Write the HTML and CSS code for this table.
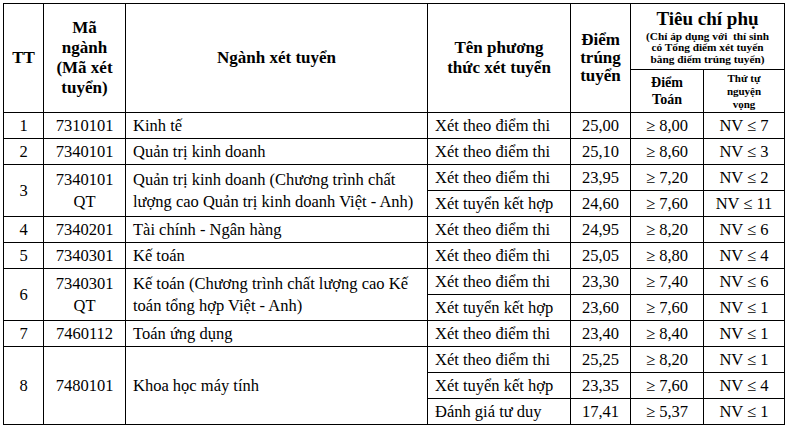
FILE: index.html
```html
<!DOCTYPE html>
<html lang="vi">
<head>
<meta charset="utf-8">
<link rel="stylesheet" href="styles.css">
</head>
<body>
<table class="scores">
  <colgroup>
    <col class="c-tt"><col class="c-ma"><col class="c-nganh"><col class="c-pt"><col class="c-diem"><col class="c-toan"><col class="c-nv">
  </colgroup>
  <thead>
    <tr class="h1">
      <th rowspan="2" class="th-big">TT</th>
      <th rowspan="2" class="th-big">Mã<br>ngành<br>(Mã xét<br>tuyển)</th>
      <th rowspan="2" class="th-big">Ngành xét tuyển</th>
      <th rowspan="2" class="th-big">Tên phương<br>thức xét tuyển</th>
      <th rowspan="2" class="th-big th-diem">Điểm<br>trúng<br>tuyển</th>
      <th colspan="2" class="th-tieuchi">
        <div class="tc-title">Tiêu chí phụ</div>
        <div class="tc-note">
          <div class="tc-line">(Chỉ áp dụng với&nbsp; thí sinh</div>
          <div class="tc-line">có Tổng điểm xét tuyển</div>
          <div class="tc-line">bằng điểm trúng tuyển)</div>
        </div>
      </th>
    </tr>
    <tr class="h2">
      <th class="th-toan">Điểm<br>Toán</th>
      <th class="th-nv"><div class="nv-clip">Thứ tự<br>nguyện<br>vọng</div></th>
    </tr>
  </thead>
  <tbody>
    <tr><td class="ctr">1</td><td class="ctr">7310101</td><td class="txt">Kinh tế</td><td class="txt">Xét theo điểm thi</td><td class="ctr">25,00</td><td class="ctr">≥ 8,00</td><td class="ctr">NV ≤ 7</td></tr>
    <tr><td class="ctr">2</td><td class="ctr">7340101</td><td class="txt">Quản trị kinh doanh</td><td class="txt">Xét theo điểm thi</td><td class="ctr">25,10</td><td class="ctr">≥ 8,60</td><td class="ctr">NV ≤ 3</td></tr>
    <tr><td rowspan="2" class="ctr">3</td><td rowspan="2" class="ctr">7340101<br>QT</td><td rowspan="2" class="txt">Quản trị kinh doanh (Chương trình chất lượng cao Quản trị kinh doanh Việt - Anh)</td><td class="txt">Xét theo điểm thi</td><td class="ctr">23,95</td><td class="ctr">≥ 7,20</td><td class="ctr">NV ≤ 2</td></tr>
    <tr><td class="txt">Xét tuyển kết hợp</td><td class="ctr">24,60</td><td class="ctr">≥ 7,60</td><td class="ctr">NV ≤ 11</td></tr>
    <tr><td class="ctr">4</td><td class="ctr">7340201</td><td class="txt">Tài chính - Ngân hàng</td><td class="txt">Xét theo điểm thi</td><td class="ctr">24,95</td><td class="ctr">≥ 8,20</td><td class="ctr">NV ≤ 6</td></tr>
    <tr><td class="ctr">5</td><td class="ctr">7340301</td><td class="txt">Kế toán</td><td class="txt">Xét theo điểm thi</td><td class="ctr">25,05</td><td class="ctr">≥ 8,80</td><td class="ctr">NV ≤ 4</td></tr>
    <tr><td rowspan="2" class="ctr">6</td><td rowspan="2" class="ctr">7340301<br>QT</td><td rowspan="2" class="txt">Kế toán (Chương trình chất lượng cao Kế toán tổng hợp Việt - Anh)</td><td class="txt">Xét theo điểm thi</td><td class="ctr">23,30</td><td class="ctr">≥ 7,40</td><td class="ctr">NV ≤ 6</td></tr>
    <tr><td class="txt">Xét tuyển kết hợp</td><td class="ctr">23,60</td><td class="ctr">≥ 7,60</td><td class="ctr">NV ≤ 1</td></tr>
    <tr><td class="ctr">7</td><td class="ctr">7460112</td><td class="txt">Toán ứng dụng</td><td class="txt">Xét theo điểm thi</td><td class="ctr">23,40</td><td class="ctr">≥ 8,40</td><td class="ctr">NV ≤ 1</td></tr>
    <tr><td rowspan="3" class="ctr">8</td><td rowspan="3" class="ctr">7480101</td><td rowspan="3" class="txt">Khoa học máy tính</td><td class="txt">Xét theo điểm thi</td><td class="ctr">25,25</td><td class="ctr">≥ 8,20</td><td class="ctr">NV ≤ 1</td></tr>
    <tr><td class="txt">Xét tuyển kết hợp</td><td class="ctr">23,35</td><td class="ctr">≥ 7,60</td><td class="ctr">NV ≤ 4</td></tr>
    <tr><td class="txt">Đánh giá tư duy</td><td class="ctr">17,41</td><td class="ctr">≥ 5,37</td><td class="ctr">NV ≤ 1</td></tr>
  </tbody>
</table>
</body>
</html>
```
FILE: styles.css
```css
html, body {
  margin: 0;
  padding: 0;
  background: #ffffff;
}
body {
  padding: 3px 0 0 3px;
  font-family: "Liberation Serif", "Times New Roman", serif;
  color: #000;
  overflow: hidden;
}
.scores {
  border-collapse: collapse;
  table-layout: fixed;
  width: 781px;
}
.c-tt { width: 40px; }
.c-ma { width: 82px; }
.c-nganh { width: 302px; }
.c-pt { width: 143px; }
.c-diem { width: 60px; }
.c-toan { width: 73px; }
.c-nv { width: 81px; }

.scores th, .scores td {
  border: 1px solid #000;
  padding: 0;
}
.scores th {
  font-weight: bold;
  text-align: center;
  vertical-align: middle;
}
.th-big {
  font-size: 17px;
  line-height: 20px;
}
.th-diem { line-height: 18px; }
.h1 { height: 66px; }
.h2 { height: 43px; }
.th-tieuchi { vertical-align: top; padding-top: 3px; }
.tc-title {
  font-size: 19px;
  line-height: 22px;
}
.tc-note {
  font-size: 11.3px;
  padding-top: 1px;
}
.tc-line {
  line-height: 11.5px;
  height: 11.5px;
}
.th-toan {
  font-size: 14px;
  line-height: 17px;
  padding-top: 3px;
}
.th-nv {
  font-size: 11px;
  line-height: 13px;
  vertical-align: top;
}
.nv-clip {
  height: 42px;
  overflow: hidden;
  padding-top: 2px;
  box-sizing: border-box;
}
.scores td {
  font-size: 16.5px;
  line-height: 22px;
  height: 25px;
  vertical-align: middle;
}
.scores td.ctr { text-align: center; }
.scores td.txt { text-align: left; padding-left: 7px; padding-right: 4px; }
```
